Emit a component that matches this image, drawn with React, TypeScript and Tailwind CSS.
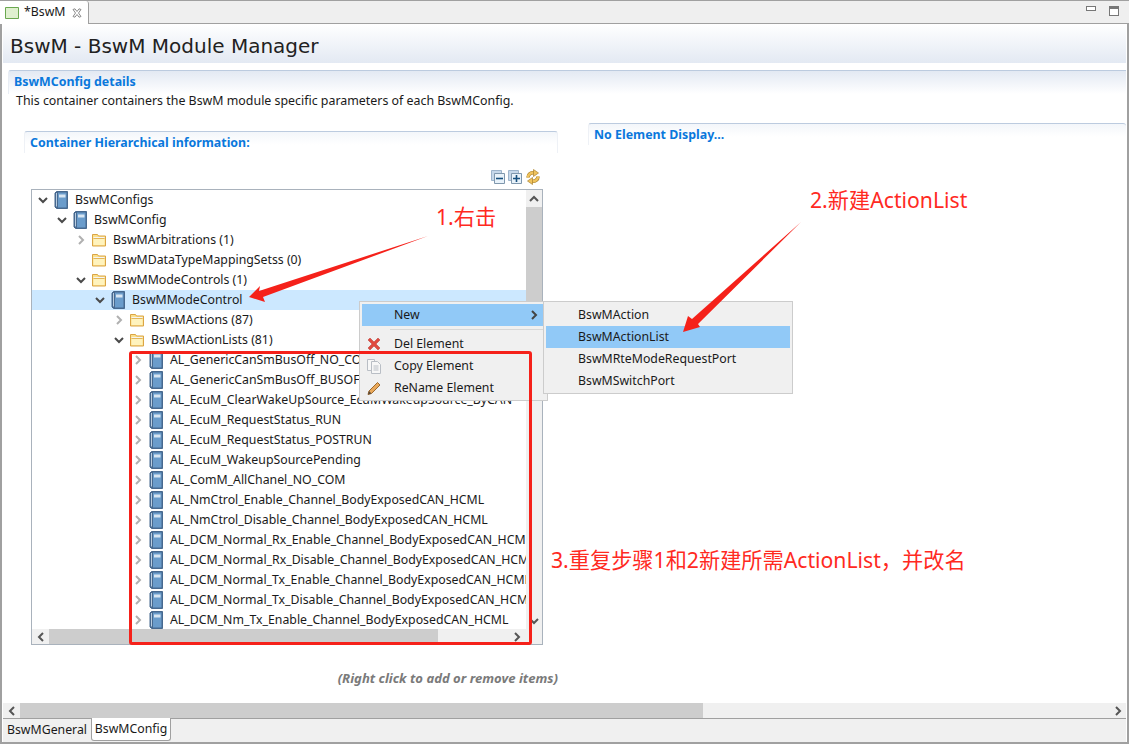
const sans = "font-['Noto_Sans','Noto_Sans_CJK_SC',sans-serif]";

type TreeRow = {
  depth: number;
  label: string;
  icon: "book" | "folder";
  state?: "open" | "closed";
  selected?: boolean;
};

const actionLists = [
  "AL_GenericCanSmBusOff_NO_COM",
  "AL_GenericCanSmBusOff_BUSOFF",
  "AL_EcuM_ClearWakeUpSource_EcuMWakeupSource_ByCAN",
  "AL_EcuM_RequestStatus_RUN",
  "AL_EcuM_RequestStatus_POSTRUN",
  "AL_EcuM_WakeupSourcePending",
  "AL_ComM_AllChanel_NO_COM",
  "AL_NmCtrol_Enable_Channel_BodyExposedCAN_HCML",
  "AL_NmCtrol_Disable_Channel_BodyExposedCAN_HCML",
  "AL_DCM_Normal_Rx_Enable_Channel_BodyExposedCAN_HCML",
  "AL_DCM_Normal_Rx_Disable_Channel_BodyExposedCAN_HCML",
  "AL_DCM_Normal_Tx_Enable_Channel_BodyExposedCAN_HCML",
  "AL_DCM_Normal_Tx_Disable_Channel_BodyExposedCAN_HCML",
  "AL_DCM_Nm_Tx_Enable_Channel_BodyExposedCAN_HCML",
];

const rows: TreeRow[] = [
  { depth: 0, label: "BswMConfigs", icon: "book", state: "open" },
  { depth: 1, label: "BswMConfig", icon: "book", state: "open" },
  { depth: 2, label: "BswMArbitrations (1)", icon: "folder", state: "closed" },
  { depth: 2, label: "BswMDataTypeMappingSetss (0)", icon: "folder" },
  { depth: 2, label: "BswMModeControls (1)", icon: "folder", state: "open" },
  { depth: 3, label: "BswMModeControl", icon: "book", state: "open", selected: true },
  { depth: 4, label: "BswMActions (87)", icon: "folder", state: "closed" },
  { depth: 4, label: "BswMActionLists (81)", icon: "folder", state: "open" },
  ...actionLists.map((label): TreeRow => ({ depth: 5, label, icon: "book", state: "closed" })),
];

function Chevron({ dir, className }: { dir: "up" | "down" | "left" | "right"; className: string }) {
  const paths = {
    up: "M4 10 8 6 12 10",
    down: "M4 6 8 10 12 6",
    left: "M10 4 6 8 10 12",
    right: "M6 4 10 8 6 12",
  };
  return (
    <svg viewBox="0 0 16 16" className={`h-4 w-4 shrink-0 ${className}`} fill="none" stroke="currentColor" strokeWidth="2">
      <path d={paths[dir]} />
    </svg>
  );
}

function BookIcon() {
  return (
    <svg viewBox="0 0 16 18" className="h-[18px] w-4 shrink-0">
      <path d="M3.5.5h11v17h-11L2 16V2z" fill="#47698f" stroke="#47698f" />
      <path d="M5 1.5h8.5v15H5z" fill="#6a9ccb" />
      <path d="M3.5 2v13.5" stroke="#b9cde0" />
      <path d="M6 3.5h6.5v3H6z" fill="#d8e6f2" />
    </svg>
  );
}

function FolderIcon() {
  return (
    <svg viewBox="0 0 16 16" className="h-4 w-4 shrink-0">
      <path d="M1.5 2.5h5l1 1.5h7v10h-13z" fill="#fbe08c" stroke="#dba544" />
      <path d="M2.5 7h11v6h-11z" fill="#fff3bd" />
      <path d="M2.5 5.5h11" stroke="#f4f4f4" />
      <path d="M2.5 6.5h11" stroke="#e3b65a" />
    </svg>
  );
}

function CollapseIcon({ plus }: { plus?: boolean }) {
  return (
    <svg viewBox="0 0 14 14" className="h-[14px] w-[14px]">
      <path d="M.5.5h10v10H.5z" fill="#c6d8ea" stroke="#9db4cc" />
      <path d="M3.5 3.5h10v10h-10z" fill="#e8f2fa" stroke="#7f97ad" />
      <path d={plus ? "M5 8.5h7M8.5 5v7" : "M5 8.5h7"} stroke="#17507f" strokeWidth="1.6" />
    </svg>
  );
}

function SyncIcon() {
  return (
    <svg viewBox="0 0 16 16" className="h-4 w-4">
      <path d="M3 8.5C3 5 6 3.5 9 3.8" fill="none" stroke="#a9812f" strokeWidth="3.6" />
      <path d="M3 8.5C3 5 6 3.5 9 3.8" fill="none" stroke="#f0c35c" strokeWidth="2.4" />
      <path d="M8.5.5 13.5 4 8.5 7.5z" fill="#f0c35c" stroke="#a9812f" strokeWidth=".7" />
      <path d="M13 7.5c0 3.5-3 5-6 4.7" fill="none" stroke="#a9812f" strokeWidth="3.6" />
      <path d="M13 7.5c0 3.5-3 5-6 4.7" fill="none" stroke="#f0c35c" strokeWidth="2.4" />
      <path d="M7.5 8.5 2.5 12l5 3.5z" fill="#f0c35c" stroke="#a9812f" strokeWidth=".7" />
    </svg>
  );
}

function Tree() {
  return (
    <div className="relative ml-[7px] mt-[4px] h-[456px] w-[512px] border border-[#a9b2bc] bg-white">
      <div className="h-[439px] w-[494px] overflow-hidden">
        {rows.map((row) => (
          <div
            key={row.label}
            className={`flex h-5 items-center whitespace-nowrap ${row.selected ? "bg-[#cce8ff]" : ""}`}
            style={{ paddingLeft: 3 + row.depth * 19 }}
          >
            {row.state ? (
              <Chevron
                dir={row.state === "open" ? "down" : "right"}
                className={row.state === "open" ? "text-[#4a4a4a]" : "text-[#b0b0b0]"}
              />
            ) : (
              <span className="h-4 w-4 shrink-0" />
            )}
            <span className="ml-[2px]">{row.icon === "book" ? <BookIcon /> : <FolderIcon />}</span>
            <span className="ml-[6px] text-[12.3px] text-[#1a1a1a]">{row.label}</span>
          </div>
        ))}
      </div>
      <div className="absolute right-0 top-0 flex h-[439px] w-[16px] flex-col bg-[#f0f0f0]">
        <Chevron dir="up" className="mt-px text-[#555555]" />
        <div className="h-[98px] bg-[#cdcdcd]" />
        <Chevron dir="down" className="mt-auto text-[#555555]" />
      </div>
      <div className="flex h-[15px] items-center bg-[#f0f0f0]">
        <Chevron dir="left" className="ml-[1px] text-[#555555]" />
        <div className="h-full w-[389px] bg-[#cdcdcd]" />
        <Chevron dir="right" className="ml-[71px] text-[#555555]" />
      </div>
    </div>
  );
}

function Subsection({ title, className }: { title: string; className: string }) {
  return (
    <div className={`h-[22px] rounded-t-[3px] border-x border-t border-x-[#eef1f6] border-t-[#bccbdf] bg-gradient-to-b from-[#f3f6fa] to-white to-60% ${className}`}>
      <div className="pl-[5px] pt-[2px] text-[12.4px] font-bold leading-[18px] text-[#0a78dc]">{title}</div>
    </div>
  );
}

function ContextMenus() {
  const item = "flex h-[22px] items-center text-[12.3px] text-[#1a1a1a]";
  return (
    <>
      <div className="absolute left-[359px] top-[301px] h-[100px] w-[189px] border border-[#cccccc] bg-[#f0f0f0] p-[2px]">
        <div className={`${item} relative bg-[#91c9f7] pl-[32px]`}>
          New
          <Chevron dir="right" className="absolute right-[3px] top-[3px] text-[#444444]" />
        </div>
        <div className="ml-[28px] mt-[3px] h-px bg-[#d7d7d7]" />
        <div className="mt-[3px]">
          <div className={`${item} relative pl-[32px]`}>
            <svg viewBox="0 0 16 16" className="absolute left-[4px] top-[3px] h-4 w-4">
              <path d="M2 4 4 2l4 4 4-4 2 2-4 4 4 4-2 2-4-4-4 4-2-2 4-4z" fill="#e0493e" stroke="#b53a33" strokeWidth=".5" />
            </svg>
            Del Element
          </div>
          <div className={`${item} relative pl-[32px]`}>
            <svg viewBox="0 0 16 16" className="absolute left-[4px] top-[3px] h-4 w-4" fill="#f7f7f7" stroke="#b9bec5">
              <path d="M1.5 1.5h7v11h-7z" />
              <path d="M5.5 3.5h6l3 3v9h-9z" />
              <path d="M7.5 8h5M7.5 10h5M7.5 12h5" />
            </svg>
            Copy Element
          </div>
          <div className={`${item} relative pl-[32px]`}>
            <svg viewBox="0 0 16 16" className="absolute left-[4px] top-[3px] h-4 w-4">
              <path d="M2 14.5 3 11 11.5 2.5l2.5 2.5L5.5 13.5z" fill="#e9a85a" stroke="#9c6a2e" />
              <path d="M2 14.5 3 11l2.5 2.5z" fill="#5a4a3a" />
            </svg>
            ReName Element
          </div>
        </div>
      </div>
      <div className="absolute left-[543px] top-[301px] h-[93px] w-[250px] border border-[#cccccc] bg-[#f0f0f0] p-[2px]">
        <div className={`${item} pl-[32px]`}>BswMAction</div>
        <div className={`${item} bg-[#91c9f7] pl-[32px]`}>BswMActionList</div>
        <div className={`${item} pl-[32px]`}>BswMRteModeRequestPort</div>
        <div className={`${item} pl-[32px]`}>BswMSwitchPort</div>
      </div>
    </>
  );
}

function Annotations() {
  const note = "absolute whitespace-nowrap text-[21.2px] leading-[28px] text-[#ff2a1f]";
  return (
    <>
      <div className="absolute left-[129px] top-[351px] h-[294px] w-[403px] rounded-[3px] border-[3px] border-[#f5211a]" />
      <svg className="absolute left-0 top-0 h-[744px] w-[1129px]" viewBox="0 0 1129 744">
        <polygon points="249,297 260,286 259,291 428,236 263,297 265,302" fill="#f5211a" />
        <polygon points="683,332 688,316 692,319 801,222 698,324 700,327" fill="#f5211a" />
      </svg>
      <div className={`${note} left-[436px] top-[203px]`}>1.右击</div>
      <div className={`${note} left-[810px] top-[186px]`}>2.新建ActionList</div>
      <div className={`${note} left-[551px] top-[546px]`}>3.重复步骤1和2新建所需ActionList，并改名</div>
    </>
  );
}

export default function App() {
  return (
    <div className={`relative flex h-[744px] w-[1129px] flex-col overflow-hidden border-b-2 border-[#a0a0a0] bg-white ${sans}`}>
      <div className="flex h-[24px] shrink-0 border-y border-y-[#a0a0a0] bg-[#efefef]">
        <div className="-mb-px flex w-[89px] items-center rounded-tr-[3px] border-r border-[#a0a0a0] bg-white pl-[5px]">
          <svg viewBox="0 0 14 12" className="h-3 w-[14px]">
            <path d="M.5.5h13v11H.5z" fill="#dff0cf" stroke="#6aa84f" />
          </svg>
          <span className="ml-[5px] text-[12.3px] text-[#1a1a1a]">*BswM</span>
          <svg viewBox="0 0 10 10" className="ml-[7px] h-[10px] w-[10px]" fill="none" stroke="#8c8c8c">
            <path d="M1 1.5 3 .8 5 3.5 7 .8 9 1.5 6.5 5 9 8.5 7 9.2 5 6.5 3 9.2 1 8.5 3.5 5z" />
          </svg>
        </div>
        <div className="ml-auto flex items-start pr-[10px] pt-[5px]">
          <div className="h-[5px] w-[10px] border border-[#777777] bg-white" />
          <div className="ml-[13px] h-[10px] w-[10px] border border-[#777777] border-t-[3px] bg-white" />
        </div>
      </div>

      <div className="flex min-h-0 flex-1 flex-col border-x-2 border-x-[#a0a0a0] bg-white pl-px pr-px">
        <div className="h-[39px] shrink-0 bg-gradient-to-b from-white to-[#e3e9f3] pl-[7px] font-['DejaVu_Sans',sans-serif] text-[20px] leading-[44px] text-[#222222]">
          BswM - BswM Module Manager
        </div>

        <div className="ml-[5px] mt-[7px] h-[24px] shrink-0 rounded-tl-[3px] border-l border-t border-l-[#e8edf4] border-t-[#bccbdf] bg-gradient-to-b from-[#e3e9f3] to-white pl-[5px] text-[12.4px] font-bold leading-[22px] text-[#0a78dc]">
          BswMConfig details
        </div>
        <div className="-mt-[2px] h-[20px] shrink-0 pl-[13px] text-[12.4px] leading-[18px] text-[#1a1a1a]">
          This container containers the BswM module specific parameters of each BswMConfig.
        </div>

        <div className="flex min-h-0 flex-1 pl-[21px]">
          <div className="w-[534px] shrink-0 pt-[19px]">
            <Subsection title="Container Hierarchical information:" className="w-[534px]" />
            <div className="mt-[16px] flex h-[16px] items-center justify-end gap-[3px] pr-[17px]">
              <CollapseIcon />
              <CollapseIcon plus />
              <SyncIcon />
            </div>
            <Tree />
            <div className="mt-[24px] text-right text-[13.1px] font-bold italic leading-[18px] text-[#7a7a7a]">
              (Right click to add or remove items)
            </div>
          </div>
          <div className="ml-[31px] min-w-0 flex-1 pt-[11px]">
            <Subsection title="No Element Display..." className="-ml-px border-r-0" />
          </div>
        </div>

        <div className="flex h-[15px] shrink-0 items-center bg-[#f0f0f0]">
          <Chevron dir="left" className="ml-px text-[#555555]" />
          <div className="h-full w-[683px] bg-[#cdcdcd]" />
          <Chevron dir="right" className="ml-auto text-[#555555]" />
        </div>
        <div className="flex h-[24px] shrink-0 border-t border-t-[#a0a0a0] bg-[#f0f0f0] text-[12.3px] text-[#1a1a1a]">
          <div className="flex w-[88px] items-center justify-center">BswMGeneral</div>
          <div className="-mt-px flex h-[23px] w-[80px] items-center justify-center rounded-b-[3px] border-x border-b border-[#a0a0a0] bg-white">
            BswMConfig
          </div>
        </div>
      </div>

      <ContextMenus />
      <Annotations />
    </div>
  );
}
